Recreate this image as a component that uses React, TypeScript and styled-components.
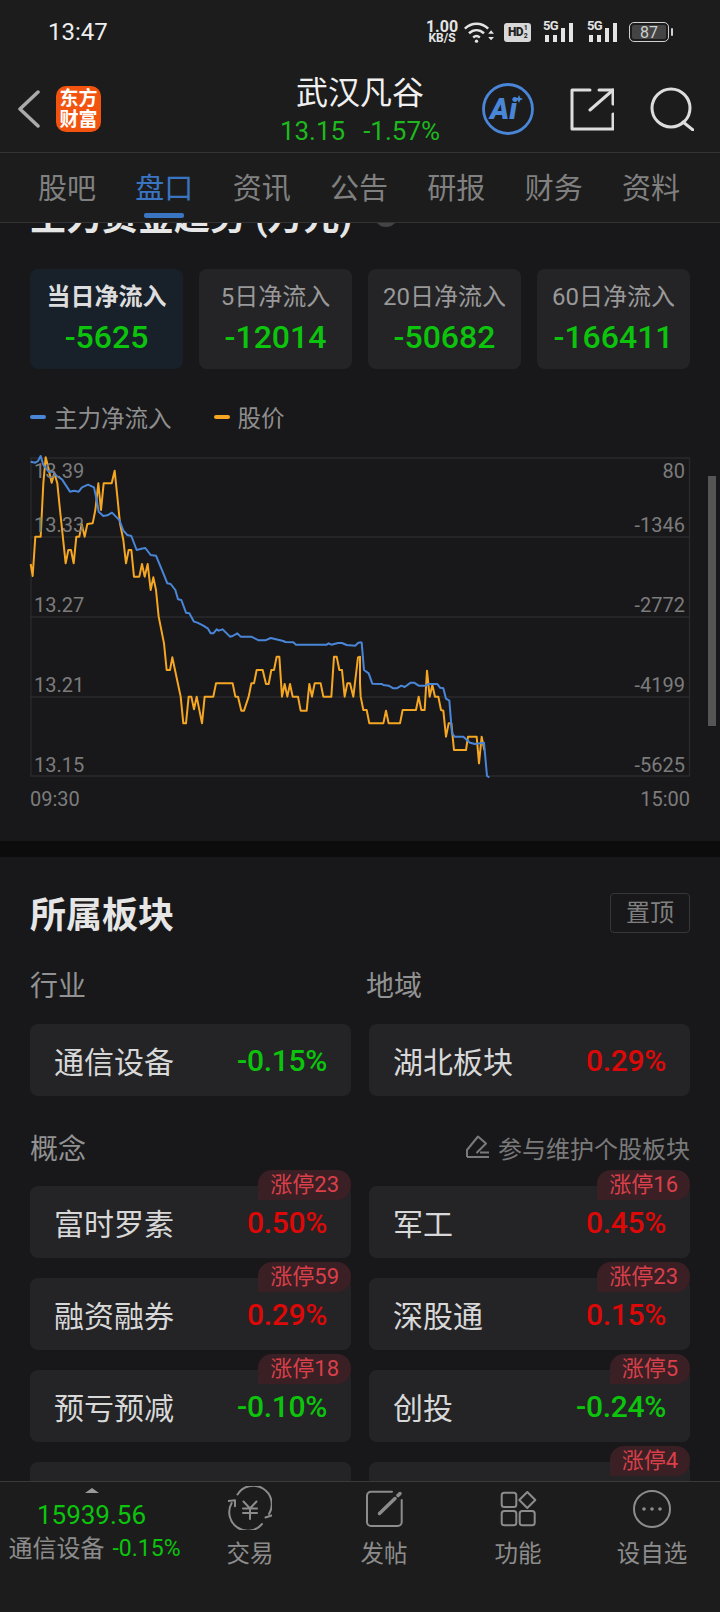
import React from "react";
import styled, { createGlobalStyle } from "styled-components";

const GREEN = "#0cc40c";
const RED = "#dd0808";

const GlobalStyle = createGlobalStyle`
  html, body {
    margin: 0;
    padding: 0;
    background: #18181a;
  }
  * {
    box-sizing: border-box;
  }
`;

// chart traces read off the reference, each half in its own 3x crop coords
const toLeft = (p: number[][]) => p.map(([x, y]) => `${x / 3},${440 + y / 3}`);
const toRight = (p: number[][]) => p.map(([x, y]) => `${360 + x / 3},${440 + y / 3}`);

const priceLine = [
  ...toLeft([
    [92, 372], [98, 408], [106, 290], [122, 290], [130, 130], [137, 52], [143, 75], [155, 128], [163, 100], [172, 130],
    [180, 210], [197, 370], [205, 330], [213, 330], [221, 370], [229, 290], [238, 290], [245, 252], [254, 290], [262, 252],
    [278, 250], [286, 210], [295, 130], [303, 210], [311, 130], [335, 130], [344, 92], [352, 170], [360, 250], [370, 300],
    [378, 370], [386, 330], [394, 330], [402, 410], [418, 410], [426, 372], [434, 410], [443, 372], [452, 450], [460, 412],
    [468, 450], [476, 530], [492, 610], [500, 690], [510, 690], [517, 652], [525, 690], [542, 770], [550, 850], [558, 850],
    [566, 770], [574, 770], [582, 808], [590, 770], [606, 850], [614, 770], [640, 770], [648, 730], [698, 730], [706, 770],
    [714, 770], [724, 812], [732, 812], [746, 770], [754, 730], [762, 730], [770, 690], [788, 690], [798, 732], [806, 732],
    [814, 690], [822, 690], [830, 650], [838, 650], [846, 770], [854, 732], [862, 770], [870, 732], [878, 770], [894, 770],
    [902, 812], [920, 812], [928, 732], [936, 770], [944, 730], [962, 730], [970, 770], [994, 770], [1002, 650], [1010, 650],
    [1018, 690], [1026, 690], [1034, 770], [1042, 730], [1050, 730], [1060, 770], [1074, 652], [1080, 650],
  ]),
  ...toRight([
    [0, 730], [2, 770], [10, 810], [20, 810], [28, 850], [70, 850], [78, 812], [86, 850], [120, 850], [128, 810],
    [168, 810], [176, 770], [184, 810], [194, 810], [201, 692], [209, 770], [217, 735], [225, 770], [235, 770], [243, 810],
    [250, 812], [258, 890], [266, 850], [274, 850], [282, 930], [318, 930], [324, 890], [350, 890], [357, 970], [365, 890],
    [373, 930],
  ]),
].join(" ");

const flowLine = [
  ...toLeft([
    [92, 65], [106, 68], [114, 63], [122, 48], [130, 75], [146, 95], [160, 95], [170, 108], [186, 118], [210, 155],
    [222, 152], [236, 155], [246, 142], [264, 134], [282, 142], [290, 180], [296, 215], [310, 228], [322, 226], [336, 218],
    [350, 232], [358, 240], [370, 272], [382, 285], [394, 288], [410, 330], [424, 326], [436, 324], [452, 345], [468, 347],
    [490, 400], [502, 430], [512, 432], [526, 450], [534, 478], [544, 480], [558, 518], [568, 520], [582, 545], [592, 548],
    [610, 557], [624, 566], [632, 580], [640, 580], [650, 568], [656, 572], [668, 568], [690, 590], [698, 588], [712, 580],
    [722, 590], [754, 590], [776, 601], [796, 601], [812, 594], [850, 603], [856, 606], [880, 607], [888, 614], [980, 614],
    [986, 610], [994, 614], [1014, 609], [1026, 609], [1040, 615], [1066, 617], [1074, 609], [1080, 607],
  ]),
  ...toRight([
    [5, 608], [12, 690], [26, 700], [37, 731], [66, 732], [70, 735], [86, 737], [100, 745], [110, 745], [124, 737],
    [134, 741], [152, 728], [162, 728], [176, 737], [196, 737], [206, 732], [232, 732], [240, 743], [250, 745], [258, 776],
    [268, 782], [276, 880], [284, 890], [310, 890], [330, 908], [345, 912], [372, 908], [381, 1008], [388, 1012],
  ]),
].join(" ");

const Page = styled.div`
  position: relative;
  display: flex;
  flex-direction: column;
  width: 720px;
  height: 1612px;
  overflow: hidden;
  background: #18181a;
  color: #ddd;
  font-family: Roboto, "Noto Sans CJK SC", sans-serif;
`;

const StatusBar = styled.div`
  flex: none;
  display: flex;
  align-items: center;
  justify-content: space-between;
  height: 65px;
  padding: 0 51px 1px 48px;
  background: #1c1c1c;
`;

const Clock = styled.div`
  font-size: 24px;
  font-weight: 400;
  color: #eee;
`;

const StatusIcons = styled.div`
  display: flex;
  align-items: center;
  color: #e4e4e4;
`;

const Speed = styled.div`
  display: flex;
  flex-direction: column;
  align-items: center;
  width: 32px;
  font-weight: 700;
  font-size: 16px;
  line-height: 13px;
  span {
    font-size: 12px;
    line-height: 11px;
  }
`;

const WifiIcon = styled.svg`
  display: block;
  margin-left: 6px;
`;

const HdChip = styled.div`
  display: flex;
  align-items: center;
  justify-content: center;
  gap: 1px;
  width: 27px;
  height: 19px;
  margin-left: 10px;
  border-radius: 3px;
  background: #d8d8d8;
  color: #222;
  font-size: 12px;
  font-weight: 900;
  letter-spacing: -0.8px;
`;

const HdLines = styled.div`
  display: flex;
  flex-direction: column;
  font-size: 7px;
  line-height: 8px;
  font-weight: 700;
`;

const Signal = styled.div`
  position: relative;
  width: 32px;
  height: 20px;
  margin-left: 12px;
  svg {
    display: block;
  }
  span {
    position: absolute;
    left: 0;
    top: -3px;
    font-size: 13px;
    line-height: 14px;
    font-weight: 700;
    letter-spacing: -0.6px;
  }
`;

const Battery = styled.div`
  position: relative;
  display: flex;
  align-items: center;
  justify-content: center;
  width: 40px;
  height: 20px;
  margin-left: 10px;
  border: 1.5px solid #cfcfcf;
  border-radius: 5px;
  color: #cfcfcf;
  font-size: 16px;
  &::before {
    content: "";
    position: absolute;
    left: 2px;
    top: 2px;
    bottom: 2px;
    right: 2px;
    border-radius: 2px;
    background: #444;
    z-index: 0;
  }
  span {
    position: relative;
  }
  &::after {
    content: "";
    position: absolute;
    right: -5px;
    top: 5px;
    width: 2px;
    height: 8px;
    background: #cfcfcf;
    border-radius: 1px;
  }
`;

const Header = styled.div`
  flex: none;
  display: grid;
  grid-template-columns: 1fr auto 1fr;
  align-items: center;
  height: 88px;
  background: #1c1c1c;
  border-bottom: 1px solid #333;
`;

const HeaderLeft = styled.div`
  display: flex;
  align-items: center;
  gap: 16px;
  padding-left: 17px;
`;

const HeaderRight = styled.div`
  display: flex;
  align-items: center;
  justify-content: flex-end;
  gap: 36px;
  padding-right: 26px;
  svg {
    display: block;
  }
`;

const Logo = styled.div`
  width: 45px;
  height: 46px;
  padding-top: 2px;
  border-radius: 10px;
  background: #f2540f;
  color: #fff;
  font-size: 19px;
  font-weight: 700;
  line-height: 21px;
  text-align: center;
`;

const Titles = styled.div`
  align-self: stretch;
  display: flex;
  flex-direction: column;
  align-items: center;
  padding-top: 7px;
`;

const StockName = styled.div`
  font-size: 32px;
  line-height: 42px;
  color: #f0f0f0;
`;

const StockPrice = styled.div`
  display: flex;
  gap: 18px;
  font-size: 26px;
  line-height: 34px;
  color: #1eb81e;
`;

const Tabs = styled.div`
  flex: none;
  display: flex;
  justify-content: space-between;
  height: 70px;
  padding: 14px 40px 0 38px;
  background: #1c1c1c;
  border-bottom: 1px solid #333;
`;

const Tab = styled.div<{ $active?: boolean }>`
  position: relative;
  height: 44px;
  font-size: 29px;
  line-height: 44px;
  color: ${(p) => (p.$active ? "#3a75c4" : "#808080")};
  &::after {
    content: "";
    display: ${(p) => (p.$active ? "block" : "none")};
    position: absolute;
    left: 9px;
    right: 9px;
    top: 46px;
    height: 5px;
    border-radius: 2px;
    background: #3a75c4;
  }
`;

const Content = styled.div`
  position: relative;
  flex: 1;
  min-height: 0;
  overflow: hidden;
`;

const Scrollbar = styled.div`
  position: absolute;
  top: 253px;
  right: 4px;
  width: 8px;
  height: 250px;
  background: #555;
`;

const FlowSection = styled.section`
  display: flow-root;
  padding: 0 30px;
  height: 618px;
`;

const ClippedTitle = styled.h2`
  display: flex;
  align-items: center;
  gap: 22px;
  margin: -27px 0 0;
  height: 44px;
  font-size: 36px;
  font-weight: 700;
  line-height: 44px;
  color: #e6e6e6;
  white-space: nowrap;
  i {
    display: block;
    width: 24px;
    height: 24px;
    margin-top: -6px;
    border-radius: 50%;
    background: #444;
  }
`;

const Periods = styled.div`
  display: grid;
  grid-template-columns: repeat(4, 1fr);
  gap: 16px;
  margin-top: 29px;
`;

const PeriodTile = styled.div<{ $active?: boolean }>`
  display: flex;
  flex-direction: column;
  align-items: center;
  height: 100px;
  padding-top: 11px;
  border-radius: 8px;
  background: ${(p) => (p.$active ? "#18202a" : "#242426")};
`;

const PeriodName = styled.div<{ $active?: boolean }>`
  font-size: 24px;
  line-height: 34px;
  font-weight: ${(p) => (p.$active ? 700 : 400)};
  color: ${(p) => (p.$active ? "#ddd" : "#999")};
  white-space: nowrap;
`;

const PeriodValue = styled.div`
  margin-top: 6px;
  font-size: 32px;
  line-height: 34px;
  font-weight: 500;
  color: ${GREEN};
`;

const Legend = styled.div`
  display: flex;
  gap: 42px;
  height: 34px;
  margin-top: 31px;
`;

const LegendItem = styled.div<{ $color: string }>`
  display: flex;
  align-items: center;
  gap: 8px;
  font-size: 23.5px;
  color: #8e8e8e;
  &::before {
    content: "";
    width: 16px;
    height: 4px;
    border-radius: 2px;
    background: ${(p) => p.$color};
  }
`;

const Chart = styled.div`
  position: relative;
  height: 320px;
  margin-top: 23px;
  svg {
    display: block;
    overflow: visible;
  }
`;

const AxisLabel = styled.div<{ $top: number; $right?: boolean }>`
  position: absolute;
  top: ${(p) => p.$top}px;
  ${(p) => (p.$right ? "right: 5px;" : "left: 4px;")}
  font-size: 20px;
  line-height: 24px;
  color: #7c7c7c;
`;

const TimeAxis = styled.div`
  display: flex;
  justify-content: space-between;
  margin-top: 7px;
  font-size: 20px;
  line-height: 30px;
  color: #7c7c7c;
`;

const Gap = styled.div`
  height: 16px;
  background: #0c0c0c;
`;

const BoardSection = styled.section`
  padding: 36px 30px 0;
`;

const BoardHead = styled.div`
  display: flex;
  justify-content: space-between;
  align-items: flex-start;
`;

const BoardTitle = styled.h2`
  margin: 0;
  font-size: 36px;
  line-height: 46px;
  font-weight: 700;
  color: #e6e6e6;
`;

const PinButton = styled.div`
  width: 80px;
  height: 40px;
  border: 1px solid #36363a;
  border-radius: 4px;
  color: #808080;
  font-size: 24px;
  line-height: 38px;
  text-align: center;
`;

const TwoCols = styled.div`
  display: grid;
  grid-template-columns: 321px 321px;
  column-gap: 18px;
  row-gap: 20px;
`;

const RegionCards = styled(TwoCols)`
  margin-top: 14px;
`;

const SubLabels = styled.div`
  display: grid;
  grid-template-columns: 336px 1fr;
  margin-top: 25px;
  font-size: 28px;
  line-height: 46px;
  color: #929292;
`;

const BoardCard = styled.div`
  position: relative;
  display: flex;
  align-items: center;
  justify-content: space-between;
  height: 72px;
  padding: 0 24px;
  border-radius: 8px;
  background: #242426;
`;

const BoardName = styled.div`
  font-size: 30px;
  color: #d8d8d8;
`;

const BoardChange = styled.div<{ $up?: boolean }>`
  font-size: 30px;
  font-weight: 500;
  letter-spacing: -0.3px;
  color: ${(p) => (p.$up ? RED : GREEN)};
`;

const LimitBadge = styled.div`
  position: absolute;
  top: -16px;
  right: 0;
  height: 30px;
  padding: 0 12px;
  border-radius: 14px 14px 14px 0;
  background: #3a1f24;
  color: #d9404a;
  font-size: 22px;
  line-height: 30px;
  white-space: nowrap;
`;

const ConceptHead = styled.div`
  display: flex;
  align-items: center;
  justify-content: space-between;
  height: 46px;
  margin: 28px 0 16px;
`;

const ConceptLabel = styled.div`
  font-size: 28px;
  color: #929292;
`;

const MaintainLink = styled.div`
  display: flex;
  align-items: center;
  gap: 8px;
  font-size: 24px;
  color: #7a7a7a;
`;

const BottomBar = styled.div`
  flex: none;
  display: grid;
  grid-template-columns: 183px repeat(4, 134px);
  height: 131px;
  background: #1c1c1c;
  border-top: 1px solid #3a3a3a;
`;

const IndexBox = styled.div`
  display: flex;
  flex-direction: column;
  align-items: center;
  padding-top: 6px;
  &::before {
    content: "";
    width: 0;
    height: 0;
    border-left: 7px solid transparent;
    border-right: 7px solid transparent;
    border-bottom: 5px solid #9a9a9a;
  }
`;

const IndexValue = styled.div`
  margin-top: 5px;
  font-size: 26px;
  line-height: 34px;
  color: ${GREEN};
`;

const IndexLine = styled.div`
  display: flex;
  gap: 8px;
  margin-left: 6px;
  font-size: 24px;
  line-height: 34px;
  color: #8c8c8c;
  white-space: nowrap;
  span {
    font-size: 23px;
    color: ${GREEN};
  }
`;

const NavItem = styled.div`
  display: flex;
  flex-direction: column;
  align-items: center;
  padding-top: 4px;
  svg {
    display: block;
  }
`;

const NavLabel = styled.div`
  margin-top: 7px;
  font-size: 23.5px;
  line-height: 34px;
  color: #8c8c8c;
`;

const periods = [
  { name: "当日净流入", value: "-5625", active: true },
  { name: "5日净流入", value: "-12014" },
  { name: "20日净流入", value: "-50682" },
  { name: "60日净流入", value: "-166411" },
];

const leftAxis = [
  { text: "13.39", top: 2 },
  { text: "13.33", top: 56 },
  { text: "13.27", top: 136 },
  { text: "13.21", top: 216 },
  { text: "13.15", top: 296 },
];

const rightAxis = [
  { text: "80", top: 2 },
  { text: "-1346", top: 56 },
  { text: "-2772", top: 136 },
  { text: "-4199", top: 216 },
  { text: "-5625", top: 296 },
];

const concepts = [
  { name: "富时罗素", change: "0.50%", up: true, badge: "涨停23" },
  { name: "军工", change: "0.45%", up: true, badge: "涨停16" },
  { name: "融资融券", change: "0.29%", up: true, badge: "涨停59" },
  { name: "深股通", change: "0.15%", up: true, badge: "涨停23" },
  { name: "预亏预减", change: "-0.10%", badge: "涨停18" },
  { name: "创投", change: "-0.24%", badge: "涨停5" },
  { name: "", change: "" },
  { name: "", change: "", badge: "涨停4" },
];

const SignalIcon = () => (
  <Signal>
    <span>5G</span>
    <svg width="32" height="20" viewBox="0 0 32 20" fill="currentColor">
      <rect x="2" y="13" width="4" height="7" />
      <rect x="10" y="13" width="4" height="7" />
      <rect x="18" y="6" width="4" height="14" />
      <rect x="26" y="1" width="4" height="19" />
    </svg>
  </Signal>
);

const App: React.FC = () => (
  <Page>
    <GlobalStyle />
    <StatusBar>
      <Clock>13:47</Clock>
      <StatusIcons>
        <Speed>
          1.00
          <span>KB/S</span>
        </Speed>
        <WifiIcon width="30" height="22" viewBox="0 0 36 26" fill="none" stroke="currentColor" strokeWidth="3">
          <path d="M1 9c8-8 20-8 28 0" />
          <path d="M6 14.500c5.500-5 12.500-5 18 0" />
          <path d="M11 19.500c3-2.500 5-2.500 8 0" />
          <circle cx="15" cy="24" r="2" fill="currentColor" stroke="none" />
          <path d="M29 15l3.500-4 3.500 4zM29 19l3.500 4 3.500-4z" fill="currentColor" stroke="none" />
        </WifiIcon>
        <HdChip>
          HD
          <HdLines>
            <span>1</span>
            <span>2</span>
          </HdLines>
        </HdChip>
        <SignalIcon />
        <SignalIcon />
        <Battery>
          <span>87</span>
        </Battery>
      </StatusIcons>
    </StatusBar>

    <Header>
      <HeaderLeft>
        <svg width="23" height="38" viewBox="0 0 23 38" fill="none" stroke="#aaa" strokeWidth="3.500" strokeLinecap="round" strokeLinejoin="round">
          <path d="M21 2L3 19l18 17" />
        </svg>
        <Logo>
          东方
          <br />
          财富
        </Logo>
      </HeaderLeft>
      <Titles>
        <StockName>武汉凡谷</StockName>
        <StockPrice>
          <span>13.15</span>
          <span>-1.57%</span>
        </StockPrice>
      </Titles>
      <HeaderRight>
        <svg width="52" height="52" viewBox="0 0 52 52" fill="none">
          <circle cx="26" cy="26" r="24.500" stroke="#4a86d8" strokeWidth="2.800" />
          <text x="8" y="36" fontFamily="Roboto" fontSize="29" fontWeight="900" fontStyle="italic" fill="#4a86d8">
            Ai
          </text>
          <path d="M37 12l1.200 2.800L41 16l-2.800 1.200L37 20l-1.200-2.800L33 16l2.800-1.200z" fill="#4a86d8" />
        </svg>
        <svg width="44" height="44" viewBox="0 0 44 44" fill="none" stroke="#ddd" strokeWidth="3" strokeLinecap="round" strokeLinejoin="round">
          <path d="M20 3H2v39h41V27" />
          <path d="M20 23L43 3" />
          <path d="M29 3h14v14" />
        </svg>
        <svg width="44" height="44" viewBox="0 0 44 44" fill="none" stroke="#ddd" strokeWidth="3" strokeLinecap="round">
          <circle cx="21" cy="21" r="19" />
          <path d="M33 35l10 8" />
        </svg>
      </HeaderRight>
    </Header>

    <Tabs>
      <Tab>股吧</Tab>
      <Tab $active>盘口</Tab>
      <Tab>资讯</Tab>
      <Tab>公告</Tab>
      <Tab>研报</Tab>
      <Tab>财务</Tab>
      <Tab>资料</Tab>
    </Tabs>

    <Content>
      <FlowSection>
        <ClippedTitle>
          主力资金趋势 (万元)
          <i />
        </ClippedTitle>
        <Periods>
          {periods.map((p) => (
            <PeriodTile key={p.name} $active={p.active}>
              <PeriodName $active={p.active}>{p.name}</PeriodName>
              <PeriodValue>{p.value}</PeriodValue>
            </PeriodTile>
          ))}
        </Periods>
        <Legend>
          <LegendItem $color="#4a86d8">主力净流入</LegendItem>
          <LegendItem $color="#f5a623">股价</LegendItem>
        </Legend>
        <Chart>
          <svg width="660" height="320" viewBox="30 457 660 320" fill="none">
            <g stroke="#2a2a2c" strokeWidth="1.300">
              <path d="M30 458H690M30 537H690M30 617H690M30 697H690M30 776H690M31 458V776M689.500 458V776" />
            </g>
            <polyline points={priceLine} stroke="#f5a623" strokeWidth="2" strokeLinejoin="round" />
            <polyline points={flowLine} stroke="#4a86d8" strokeWidth="2" strokeLinejoin="round" />
          </svg>
          {leftAxis.map((a) => (
            <AxisLabel key={a.text} $top={a.top}>
              {a.text}
            </AxisLabel>
          ))}
          {rightAxis.map((a) => (
            <AxisLabel key={a.text} $top={a.top} $right>
              {a.text}
            </AxisLabel>
          ))}
        </Chart>
        <TimeAxis>
          <span>09:30</span>
          <span>15:00</span>
        </TimeAxis>
      </FlowSection>

      <Gap />

      <BoardSection>
        <BoardHead>
          <BoardTitle>所属板块</BoardTitle>
          <PinButton>置顶</PinButton>
        </BoardHead>
        <SubLabels>
          <div>行业</div>
          <div>地域</div>
        </SubLabels>
        <RegionCards>
          <BoardCard>
            <BoardName>通信设备</BoardName>
            <BoardChange>-0.15%</BoardChange>
          </BoardCard>
          <BoardCard>
            <BoardName>湖北板块</BoardName>
            <BoardChange $up>0.29%</BoardChange>
          </BoardCard>
        </RegionCards>
        <ConceptHead>
          <ConceptLabel>概念</ConceptLabel>
          <MaintainLink>
            <svg width="24" height="24" viewBox="0 0 24 24" fill="none" stroke="#7a7a7a" strokeWidth="2" strokeLinejoin="round">
              <path d="M1 22V15L12 1.500l8 7-9.500 9.500" />
              <path d="M1 22H23M14 17.500H23" />
            </svg>
            参与维护个股板块
          </MaintainLink>
        </ConceptHead>
        <TwoCols>
          {concepts.map((c, i) => (
            <BoardCard key={i}>
              <BoardName>{c.name}</BoardName>
              <BoardChange $up={c.up}>{c.change}</BoardChange>
              {c.badge && <LimitBadge>{c.badge}</LimitBadge>}
            </BoardCard>
          ))}
        </TwoCols>
      </BoardSection>

      <Scrollbar />
    </Content>

    <BottomBar>
      <IndexBox>
        <IndexValue>15939.56</IndexValue>
        <IndexLine>
          通信设备
          <span>-0.15%</span>
        </IndexLine>
      </IndexBox>
      <NavItem>
        <svg width="44" height="44" viewBox="0 0 44 44" fill="none" stroke="#8c8c8c" strokeWidth="2" strokeLinecap="round" strokeLinejoin="round">
          <path d="M9.500 8.500A18.500 18.500 0 0 1 41 28" />
          <path d="M3.700 17A18.500 18.500 0 0 0 34 38" />
          <path d="M0.500 15l6.500-.7v6M37.500 31.500l6-2" />
          <path d="M15.500 15.500L22 22.500l6.500-7M15 22.500h14M15 27h14M22 22.500V33" />
        </svg>
        <NavLabel>交易</NavLabel>
      </NavItem>
      <NavItem>
        <svg width="44" height="44" viewBox="0 0 44 44" fill="none" stroke="#8c8c8c" strokeLinecap="round">
          <path d="M30 5.700H9a4 4 0 0 0-4 4V36a4 4 0 0 0 4 4h26.700a4 4 0 0 0 4-4V14" strokeWidth="2" />
          <path d="M17.500 27.500L33 12.500" strokeWidth="3.500" />
          <path d="M36 9.500l2-2" strokeWidth="3.500" />
        </svg>
        <NavLabel>发帖</NavLabel>
      </NavItem>
      <NavItem>
        <svg width="44" height="44" viewBox="0 0 44 44" fill="none" stroke="#8c8c8c" strokeWidth="2" strokeLinejoin="round">
          <rect x="5.700" y="6.700" width="14.600" height="14.300" rx="2.500" />
          <rect x="5.700" y="25" width="14.600" height="14.300" rx="2.500" />
          <rect x="23.700" y="25" width="15" height="14.300" rx="2.500" />
          <path d="M31.300 6l8 8-8 8-8-8z" />
        </svg>
        <NavLabel>功能</NavLabel>
      </NavItem>
      <NavItem>
        <svg width="44" height="44" viewBox="0 0 44 44" fill="none">
          <circle cx="22" cy="23" r="18" stroke="#8c8c8c" strokeWidth="2" />
          <circle cx="14" cy="23" r="1.800" fill="#8c8c8c" />
          <circle cx="22" cy="23" r="1.800" fill="#8c8c8c" />
          <circle cx="30" cy="23" r="1.800" fill="#8c8c8c" />
        </svg>
        <NavLabel>设自选</NavLabel>
      </NavItem>
    </BottomBar>
  </Page>
);

export default App;
